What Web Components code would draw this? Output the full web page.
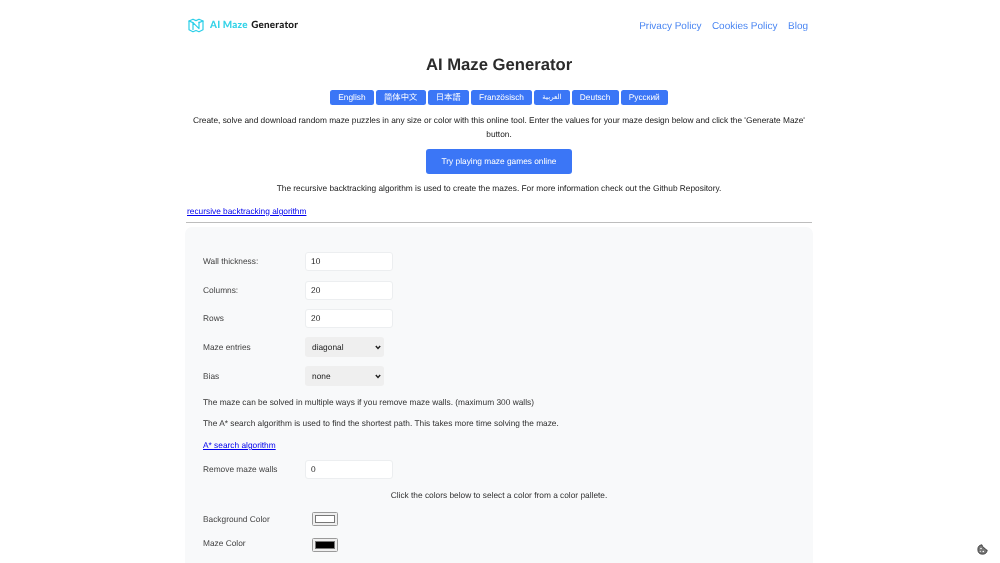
<!DOCTYPE html>
<html><head><meta charset="utf-8"><style>
html,body{margin:0;padding:0;background:#fff;height:563px;overflow:hidden}
body{font-family:"Liberation Sans",Arial,sans-serif;color:#212529;text-rendering:geometricPrecision}
</style></head><body>
<maze-app></maze-app>
<cookie-badge></cookie-badge>
<script>
function def(name,html,init){customElements.define(name,class extends HTMLElement{constructor(){super();this.attachShadow({mode:'open'}).innerHTML=html;}connectedCallback(){init&&init(this)}})}
def('maze-logo',`<style>:host{display:flex;align-items:center;gap:6px;font:700 9.9px Lato,"Liberation Sans",sans-serif;margin-top:-1px}
svg{width:16px;height:15px;display:block}.a{color:#35d3e8}.b{color:#1c1c1c}span{display:flex;gap:3.500px;letter-spacing:.2px}</style>
<svg viewBox="0 0 16 15" fill="none" stroke="#2bcfe8" stroke-width="1.2" stroke-linejoin="round" stroke-linecap="round"><path d="M1 3 5 1.200 8 2.600 11 1.200 15 3V11.700L11 13.800 8 12.500 5 13.800 1 11.700Z"/><path d="M5 11.500V4.600L11 10.600V4"/><path d="M1 3 5 4.600M15 3 11 4.600"/></svg>
<span><b class="a">AI Maze</b><b class="b">Generator</b></span>`);
def('nav-link',`<style>:host{display:block;font-size:10px;color:#4a86f2;line-height:13px}</style><slot></slot>`);
def('site-header',`<style>:host{display:flex;justify-content:space-between;align-items:center;height:13px;padding:19px 5px 0 3px}
nav{display:flex;gap:10.5px;margin-top:1px}</style><slot name="logo"></slot><nav><slot></slot></nav>`);
def('lang-btn',`<style>:host{display:block;background:#3b76f6;color:#fff;font-size:8.33px;line-height:15px;height:15px;padding:0 8.2px;border-radius:2.5px;white-space:nowrap;font-family:"Liberation Sans","Noto Sans CJK SC",sans-serif}</style><slot></slot>`);
def('form-row',`<style>:host{display:grid;grid-template-columns:102px auto;align-items:center;justify-content:start;font-size:8.33px;color:#444;height:var(--h,19px);margin-bottom:var(--m,9.5px)}span{margin-top:-1px}</style><span><slot name="label"></slot></span><slot></slot>`);
def('text-field',`<style>:host{display:block;width:88px;height:19px;box-sizing:border-box;background:#fff;border:1px solid #eceef0;border-radius:3px;font-size:8.33px;line-height:17px;padding-left:5px;color:#222}</style><slot></slot>`);
def('select-field',`<style>:host{display:flex;width:79px;height:20px;box-sizing:border-box;background:#efefef;border-radius:3px;font-size:8.33px;align-items:center;justify-content:space-between;padding:0 3px 0 7px;color:#222}
svg{width:6px;height:5px}</style><span><slot></slot></span><svg viewBox="0 0 6 5" fill="none" stroke="#222" stroke-width="1.4"><path d="M.8 1 3 3.400 5.200 1"/></svg>`);
def('color-swatch',`<style>:host{display:block;margin-left:7px;width:26px;height:14px;box-sizing:border-box;background:#efefef;border:1px solid #9a9a9a;border-radius:1.5px;padding:2px}
div{height:100%;box-sizing:border-box;background:var(--c,#fff);border:1px solid #777}</style><div></div>`);
def('form-panel',`<style>:host{display:block;background:#f8f9fa;border-radius:7px 7px 0 0;margin-top:4px;padding:25px 18px 0;height:336px;overflow:hidden;box-sizing:border-box;font-size:8.33px;color:#333}
p{margin:0;line-height:12px}a{color:#0000ee;text-decoration:underline}
.c{text-align:center}</style>
<form-row><span slot="label">Wall thickness:</span><text-field>10</text-field></form-row>
<form-row><span slot="label">Columns:</span><text-field>20</text-field></form-row>
<form-row style="--m:9px"><span slot="label">Rows</span><text-field>20</text-field></form-row>
<form-row style="--h:20px;--m:9px"><span slot="label">Maze entries</span><select-field>diagonal</select-field></form-row>
<form-row style="--h:20px;--m:10px"><span slot="label">Bias</span><select-field>none</select-field></form-row>
<p>The maze can be solved in multiple ways if you remove maze walls. (maximum 300 walls)</p>
<p style="margin-top:9px">The A* search algorithm is used to find the shortest path. This takes more time solving the maze.</p>
<p style="margin-top:10px"><a>A* search algorithm</a></p>
<form-row style="margin-top:9px;--m:10px"><span slot="label">Remove maze walls</span><text-field>0</text-field></form-row>
<p class="c">Click the colors below to select a color from a color pallete.</p>
<form-row style="--h:14px;--m:11px;margin-top:11px"><span slot="label">Background Color</span><color-swatch></color-swatch></form-row>
<form-row style="--h:15px"><span slot="label" style="display:block;margin-top:-2px">Maze Color</span><color-swatch style="--c:#000"></color-swatch></form-row>`);
def('maze-app',`<style>:host{display:block;width:628px;margin-left:185px;filter:blur(.3px)}
h1{font-size:16.66px;line-height:22px;margin:22px 0 0;text-align:center;color:#2b2b2b;font-weight:700}
.langs{display:flex;justify-content:center;gap:2px;margin-top:14px}
p{margin:0;font-size:8.33px;line-height:14px;text-align:center;color:#222}
.intro{margin-top:8px;padding:0 6px}
.cta{display:block;width:146px;height:25px;margin:8px auto 0;background:#3b76f6;color:#fff;border-radius:3px;font-size:8.33px;line-height:25px;text-align:center}
.link{text-align:left;padding-left:2px;margin-top:9px;color:#0000ee;text-decoration:underline}
hr{border:0;height:1px;background:#bdbdbd;margin:4px 1px 0}</style>
<site-header><maze-logo slot="logo"></maze-logo><nav-link>Privacy Policy</nav-link><nav-link>Cookies Policy</nav-link><nav-link>Blog</nav-link></site-header>
<h1>AI Maze Generator</h1>
<div class="langs"><lang-btn>English</lang-btn><lang-btn>简体中文</lang-btn><lang-btn>日本語</lang-btn><lang-btn>Französisch</lang-btn><lang-btn style="font-size:7px">العربية</lang-btn><lang-btn>Deutsch</lang-btn><lang-btn>Русский</lang-btn></div>
<p class="intro">Create, solve and download random maze puzzles in any size or color with this online tool. Enter the values for your maze design below and click the 'Generate Maze' button.</p>
<div class="cta">Try playing maze games online</div>
<p style="margin-top:7px">The recursive backtracking algorithm is used to create the mazes. For more information check out the Github Repository.</p>
<p class="link">recursive backtracking algorithm</p>
<hr>
<form-panel></form-panel>`);
def('cookie-badge',`<style>:host{position:fixed;left:977px;top:544px;width:11px;height:11px;display:block;filter:blur(.3px)}svg{display:block}</style>
<svg width="11" height="11" viewBox="0 0 11 11"><path d="M5 .8a4.700 4.700 0 1 0 5.200 5.200 2 2 0 0 1-2.200-1.700A2 2 0 0 1 6 2.600 2 2 0 0 1 5 .8Z" fill="#777" stroke="#333" stroke-width=".8"/><circle cx="4" cy="4.500" r=".8" fill="#fff"/><circle cx="6.300" cy="7.500" r=".8" fill="#fff"/><circle cx="3.300" cy="7.300" r=".6" fill="#fff"/></svg>`);
</script>
</body></html>
